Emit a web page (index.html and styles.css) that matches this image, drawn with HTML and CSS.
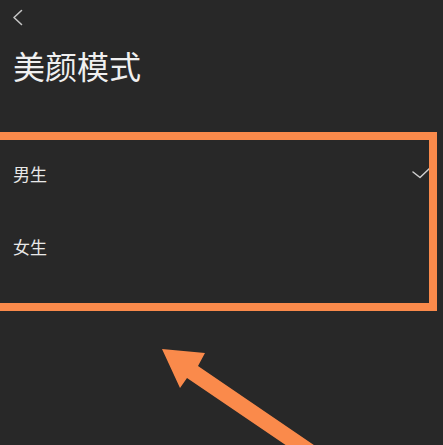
FILE: index.html
```html
<!DOCTYPE html>
<html lang="zh-CN">
<head>
<meta charset="utf-8">
<title>美颜模式</title>
<link rel="stylesheet" href="styles.css">
</head>
<body>
<div class="page">
  <div class="topbar">
    <svg class="back" width="12" height="18" viewBox="0 0 12 18"><path d="M9.5 1.5 L2 8.5 L9.5 15.5" fill="none" stroke="#c4c4c4" stroke-width="1.6" stroke-linecap="round" stroke-linejoin="round"/></svg>
  </div>
  <h1 class="title">美颜模式</h1>
  <ul class="options">
    <li class="option">
      <span class="label">男生</span>
      <svg class="check" width="19" height="12" viewBox="0 0 19 12"><path d="M1 5 L8 10.5 L18 1" fill="none" stroke="#cfcfcf" stroke-width="1.5" stroke-linecap="round" stroke-linejoin="round"/></svg>
    </li>
    <li class="option">
      <span class="label">女生</span>
    </li>
  </ul>
  <div class="highlight"></div>
  <svg class="pointer" width="443" height="445" viewBox="0 0 443 445"><polygon points="162,349 205,353 198,366 330,456 318,467 187,378 180,388" fill="#fa8a4b"/></svg>
</div>
</body>
</html>
```
FILE: styles.css
```css
html, body {
  margin: 0;
  padding: 0;
  background: #282828;
}
body {
  width: 443px;
  height: 445px;
  overflow: hidden;
  font-family: "Noto Sans CJK SC", "Noto Sans", sans-serif;
  color: #ececec;
}
.page {
  position: relative;
  width: 443px;
  height: 445px;
  overflow: hidden;
}
.topbar {
  height: 35px;
  display: flex;
  align-items: center;
  padding-left: 12px;
}
.back {
  display: block;
}
.title {
  margin: 9px 0 0 0;
  padding-left: 13px;
  font-size: 32px;
  line-height: 42px;
  font-weight: 400;
  color: #f0f0f0;
}
.options {
  list-style: none;
  margin: 51px 0 0 0;
  padding: 0;
}
.option {
  height: 73px;
  display: flex;
  align-items: center;
  justify-content: space-between;
  padding: 0 12px 0 13px;
}
.label {
  font-size: 17px;
  line-height: 24px;
  color: #e8e8e8;
}
.check {
  display: block;
  margin-top: -1px;
}
.highlight {
  position: absolute;
  left: -20px;
  top: 132px;
  width: 457px;
  height: 179px;
  box-sizing: border-box;
  border: 8px solid #fa8a4b;
}
.pointer {
  position: absolute;
  left: 0;
  top: 0;
  pointer-events: none;
}
```
